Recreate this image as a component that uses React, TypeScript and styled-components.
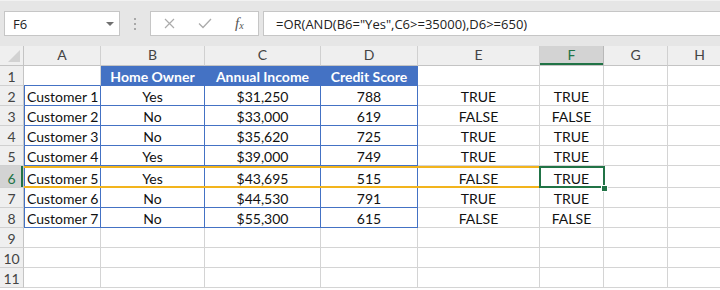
import React from 'react';
import styled, { createGlobalStyle, css } from 'styled-components';

const GRID = '#d4d4d4';
const BLUE = '#4472c4';
const GREEN = '#217346';
const ORANGE = '#f2b41d';

const Global = createGlobalStyle`
  html, body { margin: 0; padding: 0; background: #fff; }
  body { width: 720px; height: 290px; overflow: hidden; }
`;

const Frame = styled.div`
  width: 720px;
  height: 290px;
  overflow: hidden;
  display: flex;
  flex-direction: column;
  background: #fff;
`;

const Toolbar = styled.div`
  flex: 0 0 46px;
  box-sizing: border-box;
  background: #e6e6e6;
  border-top: 1px solid #f2f2f2;
  display: flex;
  align-items: center;
  padding-left: 4px;
  font-family: 'Open Sans', 'Noto Sans', sans-serif;
  font-size: 13px;
  color: #222;
`;

const NameBox = styled.div`
  box-sizing: border-box;
  width: 116px;
  height: 25px;
  background: #fff;
  border: 1px solid #c6c6c6;
  display: flex;
  align-items: center;
  justify-content: space-between;
  padding: 0 5px 0 8px;
`;

const Caret = styled.span`
  width: 0;
  height: 0;
  border-left: 4px solid transparent;
  border-right: 4px solid transparent;
  border-top: 4px solid #707070;
  margin-top: 1px;
`;

const Grip = styled.span`
  display: flex;
  flex-direction: column;
  gap: 3px;
  margin: 0 14px;
  span {
    width: 2px;
    height: 2px;
    background: #a8a8a8;
  }
`;

const FxBox = styled.div`
  box-sizing: border-box;
  width: 109px;
  height: 25px;
  background: #fff;
  border: 1px solid #c6c6c6;
  display: flex;
  align-items: center;
  padding-left: 13px;
  gap: 23px;
`;

const Fx = styled.span`
  font-family: 'Liberation Serif', 'DejaVu Serif', serif;
  font-style: italic;
  font-size: 15px;
  color: #555;
  sub {
    font-size: 10px;
    vertical-align: baseline;
    position: relative;
    top: 1px;
  }
`;

const FormulaBox = styled.div`
  box-sizing: border-box;
  flex: 1;
  margin-left: 4px;
  height: 25px;
  background: #fff;
  border: 1px solid #c6c6c6;
  border-right: none;
  display: flex;
  align-items: center;
  padding-left: 12px;
  white-space: nowrap;
`;

const Sheet = styled.div`
  display: grid;
  grid-template-columns: 24px 77px 104px 116px 97px 122px 64px 64px 64px;
  grid-template-rows: repeat(6, 20px) 22px repeat(5, 20px);
  font-family: Lato, 'Liberation Sans', sans-serif;
  font-size: 14px;
`;

const Corner = styled.div`
  position: relative;
  box-sizing: border-box;
  background: #efefef;
  border-right: 1px solid #c4c4c4;
  border-bottom: 1px solid #c4c4c4;
  &::after {
    content: '';
    position: absolute;
    right: 3px;
    bottom: 3px;
    width: 0;
    height: 0;
    border-left: 12px solid transparent;
    border-bottom: 12px solid #d2d2d2;
  }
`;

const ColHead = styled.div<{ $sel?: boolean }>`
  box-sizing: border-box;
  display: flex;
  align-items: flex-end;
  justify-content: center;
  padding-bottom: 3px;
  line-height: 15px;
  background: ${p => (p.$sel ? '#d3d3d3' : '#efefef')};
  color: ${p => (p.$sel ? GREEN : '#444')};
  border-right: 1px solid ${p => (p.$sel ? '#b8b8b8' : '#d0d0d0')};
  border-bottom: 1px solid #c4c4c4;
  ${p => p.$sel && css`box-shadow: inset 0 -2px 0 ${GREEN};`}
`;

const RowHead = styled.div<{ $sel?: boolean }>`
  box-sizing: border-box;
  display: flex;
  align-items: flex-end;
  justify-content: center;
  padding-bottom: 1px;
  line-height: 15px;
  background: ${p => (p.$sel ? '#d3d3d3' : '#efefef')};
  color: ${p => (p.$sel ? GREEN : '#444')};
  border-right: 1px solid #c4c4c4;
  border-bottom: 1px solid #d0d0d0;
  ${p => p.$sel && css`box-shadow: inset -2px 0 0 ${GREEN};`}
`;

type CellProps = {
  $left?: boolean;
  $fill?: boolean;
  $table?: boolean;
  $edge?: boolean;
  $blueBottom?: boolean;
  $hl?: boolean;
  $sel?: boolean;
};

const Cell = styled.div<CellProps>`
  position: relative;
  box-sizing: border-box;
  display: flex;
  align-items: flex-end;
  justify-content: ${p => (p.$left ? 'flex-start' : 'center')};
  padding: 0 3px 1px;
  line-height: 15px;
  white-space: nowrap;
  color: #111;
  border-right: 1px solid ${p => (p.$table || p.$fill ? BLUE : GRID)};
  border-bottom: 1px solid ${p => (p.$table || p.$fill || p.$blueBottom ? BLUE : GRID)};
  ${p => p.$fill && css`
    background: ${BLUE};
    color: #fff;
    font-weight: 700;
  `}
  ${p => p.$edge && css`box-shadow: inset 1px 0 0 ${BLUE};`}
  ${p => p.$hl && css`
    &::before, &::after {
      content: '';
      position: absolute;
      left: 0;
      right: -1px;
      height: 2px;
      background: ${ORANGE};
    }
    &::before { top: 0; }
    &::after { bottom: -1px; }
  `}
  ${p => p.$sel && css`
    &::before {
      content: '';
      position: absolute;
      left: -1px;
      top: 0;
      right: -2px;
      bottom: -1px;
      border: 2px solid ${GREEN};
    }
    &::after {
      content: '';
      position: absolute;
      right: -4px;
      bottom: -4px;
      width: 5px;
      height: 5px;
      background: ${GREEN};
      box-shadow: 0 0 0 1px #fff;
      z-index: 1;
    }
  `}
`;

const cols = ['A', 'B', 'C', 'D', 'E', 'F', 'G', 'H'];

const data: [string, string, string, string, string, string][] = [
  ['Customer 1', 'Yes', '$31,250', '788', 'TRUE', 'TRUE'],
  ['Customer 2', 'No', '$33,000', '619', 'FALSE', 'FALSE'],
  ['Customer 3', 'No', '$35,620', '725', 'TRUE', 'TRUE'],
  ['Customer 4', 'Yes', '$39,000', '749', 'TRUE', 'TRUE'],
  ['Customer 5', 'Yes', '$43,695', '515', 'FALSE', 'TRUE'],
  ['Customer 6', 'No', '$44,530', '791', 'TRUE', 'TRUE'],
  ['Customer 7', 'No', '$55,300', '615', 'FALSE', 'FALSE'],
];

const CrossIcon = () => (
  <svg width="11" height="11" viewBox="0 0 11 11">
    <path d="M1 1 L10 10 M10 1 L1 10" stroke="#ababab" strokeWidth="1.2" fill="none" />
  </svg>
);

const CheckIcon = () => (
  <svg width="14" height="11" viewBox="0 0 14 11">
    <path d="M1 5.5 L5 9.5 L13 1" stroke="#ababab" strokeWidth="1.3" fill="none" />
  </svg>
);

export default function App() {
  const rows: React.ReactNode[] = [];
  for (let r = 1; r <= 11; r++) {
    const sel = r === 6;
    rows.push(
      <RowHead key={`rh${r}`} $sel={sel}>
        {r}
      </RowHead>
    );
    if (r === 1) {
      rows.push(<Cell key="a1" $left $blueBottom />);
      rows.push(<Cell key="b1" $fill>Home Owner</Cell>);
      rows.push(<Cell key="c1" $fill>Annual Income</Cell>);
      rows.push(<Cell key="d1" $fill>Credit Score</Cell>);
      rows.push(<Cell key="e1" />);
      rows.push(<Cell key="f1" />);
      rows.push(<Cell key="g1" />);
      rows.push(<Cell key="h1" />);
    } else if (r <= 8) {
      const d = data[r - 2];
      rows.push(<Cell key={`a${r}`} $left $table $edge $hl={sel}>{d[0]}</Cell>);
      rows.push(<Cell key={`b${r}`} $table $hl={sel}>{d[1]}</Cell>);
      rows.push(<Cell key={`c${r}`} $table $hl={sel}>{d[2]}</Cell>);
      rows.push(<Cell key={`d${r}`} $table $hl={sel}>{d[3]}</Cell>);
      rows.push(<Cell key={`e${r}`} $hl={sel}>{d[4]}</Cell>);
      rows.push(<Cell key={`f${r}`} $sel={sel}>{d[5]}</Cell>);
      rows.push(<Cell key={`g${r}`} />);
      rows.push(<Cell key={`h${r}`} />);
    } else {
      cols.forEach(c => rows.push(<Cell key={`${c}${r}`} />));
    }
  }

  return (
    <Frame>
      <Global />
      <Toolbar>
        <NameBox>
          <span>F6</span>
          <Caret />
        </NameBox>
        <Grip>
          <span />
          <span />
          <span />
        </Grip>
        <FxBox>
          <CrossIcon />
          <CheckIcon />
          <Fx>
            f<sub>x</sub>
          </Fx>
        </FxBox>
        <FormulaBox>=OR(AND(B6="Yes",C6&gt;=35000),D6&gt;=650)</FormulaBox>
      </Toolbar>
      <Sheet>
        <Corner />
        {cols.map(c => (
          <ColHead key={c} $sel={c === 'F'}>
            {c}
          </ColHead>
        ))}
        {rows}
      </Sheet>
    </Frame>
  );
}
